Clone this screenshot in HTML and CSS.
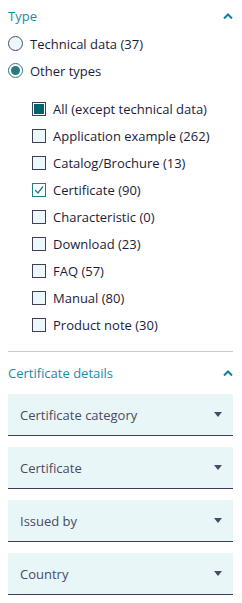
FILE: index.html
```html
<!DOCTYPE html>
<html lang="en">
<head>
  <meta charset="UTF-8" />
  <meta name="viewport" content="width=device-width, initial-scale=1.0"/>
  <title>Filters</title>
  <link rel="stylesheet" href="styles.css">
</head>
<body>
  <div class="filter-group">
    <div class="group-header">
      <span class="group-title">Type</span>
      <svg class="chevron" width="10" height="6" viewBox="0 0 10 6"><path d="M1 5.5 L5 1.5 L9 5.5" fill="none" stroke="#0a7f9a" stroke-width="2"/></svg>
    </div>

    <div class="radio-list">
      <label class="radio-row"><span class="radio"></span>Technical data (37)</label>
      <label class="radio-row"><span class="radio checked"></span>Other types</label>
    </div>

    <div class="check-list">
      <label class="check-row"><span class="box filled"></span>All (except technical data)</label>
      <label class="check-row"><span class="box"></span>Application example (262)</label>
      <label class="check-row"><span class="box"></span>Catalog/Brochure (13)</label>
      <label class="check-row"><span class="box ticked"><svg width="12" height="12" viewBox="0 0 12 12"><path d="M2 6 L5 9 L10 2.5" fill="none" stroke="#1f7f84" stroke-width="1.3"/></svg></span>Certificate (90)</label>
      <label class="check-row"><span class="box"></span>Characteristic (0)</label>
      <label class="check-row"><span class="box"></span>Download (23)</label>
      <label class="check-row"><span class="box"></span>FAQ (57)</label>
      <label class="check-row"><span class="box"></span>Manual (80)</label>
      <label class="check-row"><span class="box"></span>Product note (30)</label>
    </div>
  </div>

  <div class="divider"></div>

  <div class="filter-group">
    <div class="group-header second">
      <span class="group-title">Certificate details</span>
      <svg class="chevron" width="10" height="6" viewBox="0 0 10 6"><path d="M1 5.5 L5 1.5 L9 5.5" fill="none" stroke="#0a7f9a" stroke-width="2"/></svg>
    </div>

    <div class="select-box"><span>Certificate category</span><span class="caret"></span></div>
    <div class="select-box"><span>Certificate</span><span class="caret"></span></div>
    <div class="select-box"><span>Issued by</span><span class="caret"></span></div>
    <div class="select-box"><span>Country</span><span class="caret"></span></div>
  </div>
</body>
</html>
```

FILE: styles.css
```css
body {
  margin: 0;
  background-color: #ffffff;
  font-family: 'Open Sans', 'Noto Sans', sans-serif;
  font-size: 13px;
  color: #1b1b3a;
  padding: 0 9px 0 8px;
}

.group-header {
  display: flex;
  justify-content: space-between;
  align-items: center;
  height: 28px;
  padding-top: 2px;
}

.group-header.second {
  margin-top: 5px;
  margin-bottom: 7px;
}

.group-title {
  color: #198ba6;
}

.radio-row, .check-row {
  display: flex;
  align-items: center;
  height: 27px;
}

.radio {
  width: 13px;
  height: 13px;
  border: 1px solid #4a4a64;
  border-radius: 50%;
  background-color: #ebf7f8;
  margin-right: 7px;
  position: relative;
}

.radio.checked {
  border-color: #2a7a80;
  background-color: #ffffff;
}

.radio.checked::after {
  content: "";
  position: absolute;
  left: 2px;
  top: 2px;
  width: 9px;
  height: 9px;
  border-radius: 50%;
  background-color: #2a7a80;
}

.check-list {
  margin-top: 11px;
  padding-left: 24px;
}

.box {
  width: 12px;
  height: 12px;
  border: 1px solid #3f3f5a;
  background-color: #ebf7f8;
  margin-right: 7px;
  display: flex;
  align-items: center;
  justify-content: center;
}

.box.filled {
  background-color: #00646e;
  box-shadow: inset 0 0 0 1px #ffffff;
}

.box.ticked {
  border-color: #1f7f84;
  background-color: #ffffff;
}

.divider {
  height: 1px;
  background-color: #c9c9d2;
  margin-top: 13px;
}

.select-box {
  display: flex;
  justify-content: space-between;
  align-items: center;
  height: 41px;
  padding: 0 11px 0 12px;
  background-color: #e8f6f8;
  border-bottom: 1px solid #3c3c58;
  margin-bottom: 11px;
  color: #4a4a64;
}

.caret {
  width: 0;
  height: 0;
  border-left: 4px solid transparent;
  border-right: 4px solid transparent;
  border-top: 5px solid #4a4a64;
}
```
